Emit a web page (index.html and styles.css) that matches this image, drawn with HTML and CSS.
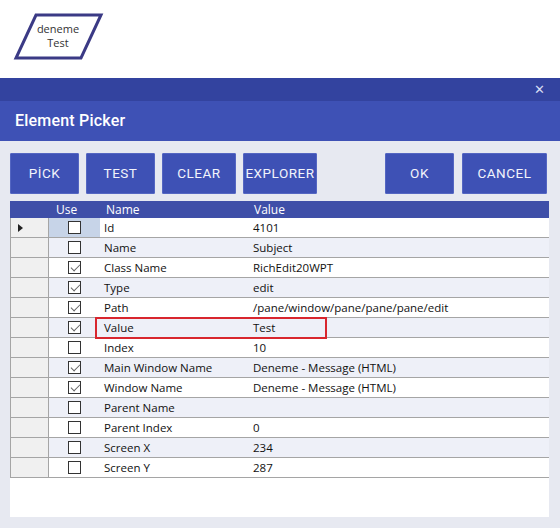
FILE: index.html
```html
<!DOCTYPE html>
<html>
<head>
<meta charset="utf-8">
<link rel="stylesheet" href="styles.css">
</head>
<body>
<div class="canvas">
  <svg class="node" width="92" height="48" viewBox="0 0 92 48">
    <polygon points="23,2 88,2 68,45 3,45" fill="#fff" stroke="#3b3a85" stroke-width="3"/>
    <text x="45" y="20" text-anchor="middle" class="node-text">deneme</text>
    <text x="45" y="34" text-anchor="middle" class="node-text">Test</text>
  </svg>
</div>
<div class="dialog">
  <div class="titlebar"><span class="close">✕</span></div>
  <div class="header">Element Picker</div>
  <div class="body">
    <div class="toolbar">
      <button class="btn w69">PİCK</button>
      <button class="btn w69">TEST</button>
      <button class="btn w74">CLEAR</button>
      <button class="btn w74">EXPLORER</button>
      <span class="spacer"></span>
      <button class="btn w69">OK</button>
      <button class="btn w85 last">CANCEL</button>
    </div>
    <div class="grid">
      <div class="row head">
        <div class="c-rh"></div>
        <div class="c-use">Use</div>
        <div class="c-name">Name</div>
        <div class="c-val">Value</div>
      </div>
      <div class="row"><div class="c-rh"><span class="arrow"></span></div><div class="c-use sel"><span class="cb"></span></div><div class="c-name">Id</div><div class="c-val">4101</div></div>
      <div class="row alt"><div class="c-rh"></div><div class="c-use"><span class="cb"></span></div><div class="c-name">Name</div><div class="c-val">Subject</div></div>
      <div class="row"><div class="c-rh"></div><div class="c-use"><span class="cb on"></span></div><div class="c-name">Class Name</div><div class="c-val">RichEdit20WPT</div></div>
      <div class="row alt"><div class="c-rh"></div><div class="c-use"><span class="cb on"></span></div><div class="c-name">Type</div><div class="c-val">edit</div></div>
      <div class="row"><div class="c-rh"></div><div class="c-use"><span class="cb on"></span></div><div class="c-name">Path</div><div class="c-val">/pane/window/pane/pane/pane/edit</div></div>
      <div class="row alt"><div class="c-rh"></div><div class="c-use"><span class="cb on"></span></div><div class="c-name">Value</div><div class="c-val">Test</div></div>
      <div class="row"><div class="c-rh"></div><div class="c-use"><span class="cb"></span></div><div class="c-name">Index</div><div class="c-val">10</div></div>
      <div class="row alt"><div class="c-rh"></div><div class="c-use"><span class="cb on"></span></div><div class="c-name">Main Window Name</div><div class="c-val">Deneme - Message (HTML)</div></div>
      <div class="row"><div class="c-rh"></div><div class="c-use"><span class="cb on"></span></div><div class="c-name">Window Name</div><div class="c-val">Deneme - Message (HTML)</div></div>
      <div class="row alt"><div class="c-rh"></div><div class="c-use"><span class="cb"></span></div><div class="c-name">Parent Name</div><div class="c-val"></div></div>
      <div class="row"><div class="c-rh"></div><div class="c-use"><span class="cb"></span></div><div class="c-name">Parent Index</div><div class="c-val">0</div></div>
      <div class="row alt"><div class="c-rh"></div><div class="c-use"><span class="cb"></span></div><div class="c-name">Screen X</div><div class="c-val">234</div></div>
      <div class="row"><div class="c-rh"></div><div class="c-use"><span class="cb"></span></div><div class="c-name">Screen Y</div><div class="c-val">287</div></div>
      <div class="highlight"></div>
    </div>
  </div>
</div>
</body>
</html>
```
FILE: styles.css
```css
* { box-sizing: border-box; }
html, body { margin: 0; padding: 0; }
body {
  width: 560px;
  height: 528px;
  overflow: hidden;
  background: #fff;
  font-family: "Open Sans", "Noto Sans", sans-serif;
}
.canvas {
  height: 78px;
  padding: 13px 0 0 13px;
}
.node { display: block; }
.node-text {
  font-family: "Open Sans", sans-serif;
  font-size: 11px;
  fill: #333;
}
.dialog {
  height: 450px;
  display: flex;
  flex-direction: column;
}
.titlebar {
  height: 23px;
  background: #33439f;
  display: flex;
  justify-content: flex-end;
  align-items: center;
  padding-right: 15px;
}
.close {
  color: #d7dcf2;
  font-size: 13px;
  line-height: 1;
  font-family: "DejaVu Sans", sans-serif;
  font-weight: bold;
}
.header {
  height: 40px;
  background: #3e51b5;
  color: #fff;
  font-family: Roboto, sans-serif;
  font-weight: 500;
  font-size: 16px;
  letter-spacing: 0.2px;
  display: flex;
  align-items: center;
  padding-left: 15px;
  padding-bottom: 1px;
}
.body {
  flex: 1;
  background: #e7e9f1;
  padding: 12px 11px 11px 10px;
  display: flex;
  flex-direction: column;
}
.toolbar {
  display: flex;
  gap: 7px;
  height: 41px;
  margin-bottom: 7px;
}
.spacer { width: 54px; }
.btn {
  flex: none;
  height: 41px;
  border: 1px solid #5466c2;
  background: #3e51b5;
  color: #f2f4fb;
  font-family: Roboto, sans-serif;
  font-weight: 400;
  font-size: 13.5px;
  letter-spacing: 0.5px;
  padding: 0 0 1px 0;
  border-radius: 1px;
}
.btn.last { margin-left: 1px; }
.w69 { width: 69px; }
.w74 { width: 74px; }
.w85 { width: 85px; }
.grid {
  flex: 1;
  background: #fff;
  position: relative;
  font-family: "Open Sans", sans-serif;
  font-size: 11.5px;
  color: #111;
}
.row {
  display: flex;
  height: 20px;
  border-bottom: 1px solid #a5a5a5;
  background: #fff;
}
.row.alt { background: #eef0f8; }
.row.head {
  height: 17px;
  background: #3f4fa8;
  color: #fff;
  border-bottom: none;
  font-size: 12px;
}
.row > div {
  display: flex;
  align-items: center;
}
.c-rh {
  width: 39px;
  background: #f0f0f0;
  border-left: 1px solid #a5a5a5;
  border-right: 1px solid #a5a5a5;
  padding-left: 7px;
}
.row.head .c-rh { background: #3f4fa8; border: none; }
.c-use {
  width: 51px;
  justify-content: center;
}
.row.head .c-use { justify-content: flex-start; padding-left: 7px; }
.c-use.sel { background: #c7d4e8; }
.c-name {
  width: 150px;
  padding-left: 4px;
}
.row.head .c-name { padding-left: 6px; }
.c-val {
  flex: 1;
  padding-left: 3px;
}
.row.head .c-val { padding-left: 4px; }
.arrow {
  width: 0;
  height: 0;
  border-top: 4px solid transparent;
  border-bottom: 4px solid transparent;
  border-left: 5px solid #222;
}
.cb {
  width: 13px;
  height: 13px;
  border: 1px solid #333;
  background: #fff;
  position: relative;
}
.cb.on::after {
  content: "";
  position: absolute;
  left: 4px;
  top: 0px;
  width: 4px;
  height: 8px;
  border-right: 1.3px solid #666;
  border-bottom: 1.3px solid #666;
  transform: rotate(45deg);
}
.highlight {
  position: absolute;
  left: 85px;
  top: 116px;
  width: 232px;
  height: 22px;
  border: 2px solid #d8262e;
}
```
